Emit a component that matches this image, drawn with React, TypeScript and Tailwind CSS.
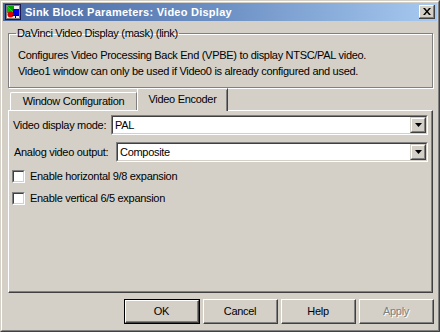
import React from "react";

const font = { fontFamily: '"Liberation Sans", Arial, sans-serif', letterSpacing: "-0.3px" };

function SimIcon() {
  return (
    <svg width="16" height="16" viewBox="0 0 16 16" className="shrink-0">
      <rect x="0.5" y="0.5" width="15" height="15" fill="#d4d0c8" stroke="#1a1a4a" />
      <rect x="1.5" y="1.5" width="13" height="13" fill="#f0f0f0" stroke="#808080" />
      <polygon points="2,2 9,2 9,9" fill="#00a000" />
      <polygon points="2,2 2,9 9,9" fill="#00c000" />
      <rect x="8" y="5" width="6" height="6" fill="#0000e0" />
      <circle cx="5.5" cy="10.5" r="3" fill="#e00000" />
      <line x1="10.5" y1="8" x2="10.5" y2="14" stroke="#000" />
      <line x1="7" y1="11.5" x2="14" y2="11.5" stroke="#000" />
    </svg>
  );
}

function Combo({ value }: { value: string }) {
  return (
    <div className="flex-1 h-[20px] border-t border-l border-[#808080] border-r border-b border-r-white border-b-white">
      <div className="h-full flex items-center border-t border-l border-[#404040] border-r border-b border-r-[#d4d0c8] border-b-[#d4d0c8] bg-white">
        <span className="flex-1 pl-[2px] text-[11px] text-black leading-none">{value}</span>
        <div className="w-[16px] h-full bg-[#d4d0c8] border-t border-l border-t-[#d4d0c8] border-l-[#d4d0c8] border-r border-b border-[#404040]">
          <div className="w-full h-full flex items-center justify-center border-t border-l border-t-white border-l-white border-r border-b border-r-[#808080] border-b-[#808080]">
            <svg width="7" height="4" viewBox="0 0 7 4">
              <polygon points="0,0 7,0 3.5,4" fill="#000" />
            </svg>
          </div>
        </div>
      </div>
    </div>
  );
}

function Check({ label }: { label: string }) {
  return (
    <div className="flex items-center gap-[5px] h-[13px]">
      <div className="w-[13px] h-[13px] border-t border-l border-[#808080] border-r border-b border-r-white border-b-white">
        <div className="w-full h-full bg-white border-t border-l border-[#404040] border-r border-b border-r-[#d4d0c8] border-b-[#d4d0c8]" />
      </div>
      <span className="text-[11px] text-black leading-none">{label}</span>
    </div>
  );
}

function Btn({ label, def, disabled }: { label: string; def?: boolean; disabled?: boolean }) {
  const inner = (
    <div className="w-full h-full border-t border-l border-t-white border-l-white border-r border-b border-[#404040]">
      <div className="w-full h-full flex items-center justify-center border-r border-b border-[#808080]">
        <span
          className={disabled ? "text-[11px] text-[#808080] [text-shadow:1px_1px_0_#fff]" : "text-[11px] text-black"}
        >
          {label}
        </span>
      </div>
    </div>
  );
  return (
    <div className={def ? "w-[76px] h-[25px] border border-black" : "w-[75px] h-[25px]"}>{inner}</div>
  );
}

export default function App() {
  return (
    <div style={font} className="w-[440px] h-[332px] bg-[#d4d0c8] border border-t-[#d4d0c8] border-l-[#d4d0c8] border-r-[#404040] border-b-[#404040]">
      <div className="w-full h-full flex flex-col border border-t-white border-l-white border-r-[#808080] border-b-[#808080] p-px">
        {/* Title bar */}
        <div className="h-[18px] shrink-0 flex items-center pl-[2px] pr-[2px] bg-gradient-to-r from-[#4a69a3] via-[#6d90c4] to-[#a6caf0]">
          <SimIcon />
          <span className="ml-[4px] flex-1 text-[11px] font-bold text-white leading-none tracking-[0.25px]">
            Sink Block Parameters: Video Display
          </span>
          <div className="w-[16px] h-[14px] bg-[#d4d0c8] border-r border-b border-[#404040]">
            <div className="w-full h-full flex items-center justify-center border-t border-l border-t-white border-l-white border-r border-b border-r-[#808080] border-b-[#808080]">
              <svg width="8" height="7" viewBox="0 0 8 7">
                <path d="M0 0h2l2 2.5L6 0h2L5 3.5 8 7H6L4 4.5 2 7H0l3-3.5z" fill="#000" />
              </svg>
            </div>
          </div>
        </div>

        {/* Group box */}
        <fieldset className="mt-[6px] ml-[5px] mr-[4px] h-[61px] shrink-0 border border-[#808080] shadow-[inset_1px_1px_0_#fff,1px_1px_0_#fff] px-[9px]">
          <legend className="ml-[-2px] px-[1px] text-[11px] leading-[13px] text-black">
            DaVinci Video Display (mask) (link)
          </legend>
          <div className="pt-[7px] text-[11px] leading-[16px] text-black">
            <div>Configures Video Processing Back End (VPBE) to display NTSC/PAL video.</div>
            <div>Video1 window can only be used if Video0 is already configured and used.</div>
          </div>
        </fieldset>

        {/* Tabs */}
        <div className="ml-[5px] mr-[4px] h-[22px] shrink-0 flex items-end pl-[2px]">
          <div className="w-[127px] h-[18px] border-t border-l border-white rounded-tl-[2px] border-r border-r-[#808080] flex items-center justify-center">
            <span className="text-[11px] text-black leading-none">Window Configuration</span>
          </div>
          <div className="relative z-10 -mb-px w-[91px] h-[23px] bg-[#d4d0c8] border-t border-l border-white rounded-tl-[2px] border-r border-r-[#404040] flex items-center justify-center pb-[2px]">
            <span className="text-[11px] text-black leading-none">Video Encoder</span>
            <div className="absolute right-0 top-[1px] bottom-0 w-px bg-[#808080]" />
          </div>
        </div>

        {/* Panel */}
        <div className="ml-[5px] mr-[4px] h-[183px] shrink-0 border-t border-l border-white border-r border-b border-r-[#404040] border-b-[#404040]">
          <div className="w-full h-full border-r border-b border-[#808080] pl-[4px] pr-[3px] pt-[4px] flex flex-col">
            <div className="flex items-center gap-[3px] h-[20px]">
              <span className="w-[95px] shrink-0 text-[11px] text-black leading-none">Video display mode:</span>
              <Combo value="PAL" />
            </div>
            <div className="flex items-center gap-[3px] h-[20px] mt-[7px] pl-px">
              <span className="w-[99px] shrink-0 text-[11px] text-black leading-none">Analog video output:</span>
              <Combo value="Composite" />
            </div>
            <div className="mt-[8px] -ml-px">
              <Check label="Enable horizontal 9/8 expansion" />
            </div>
            <div className="mt-[9px] -ml-px">
              <Check label="Enable vertical 6/5 expansion" />
            </div>
          </div>
        </div>

        {/* Buttons */}
        <div className="mt-[6px] flex justify-end items-center gap-[3px] pr-[3px]">
          <Btn label="OK" def />
          <Btn label="Cancel" />
          <Btn label="Help" />
          <Btn label="Apply" disabled />
        </div>
      </div>
    </div>
  );
}
